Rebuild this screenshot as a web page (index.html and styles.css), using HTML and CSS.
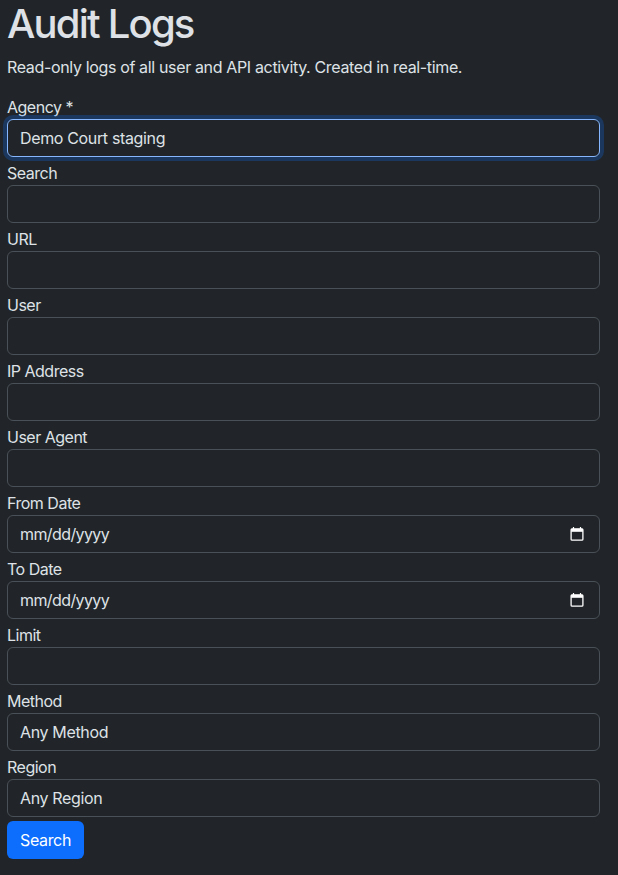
FILE: index.html
```html
<!DOCTYPE html>
<html lang="en">
<head>
<meta charset="utf-8">
<title>Audit Logs</title>
<link rel="stylesheet" href="styles.css">
</head>
<body>
<h1 class="title">Audit Logs</h1>
<p class="lead">Read-only logs of all user and API activity. Created in real-time.</p>
<form class="form">
  <div class="field"><label class="label">Agency *</label><div class="input focus">Demo Court staging</div></div>
  <div class="field"><label class="label">Search</label><div class="input"></div></div>
  <div class="field"><label class="label">URL</label><div class="input"></div></div>
  <div class="field"><label class="label">User</label><div class="input"></div></div>
  <div class="field"><label class="label">IP Address</label><div class="input"></div></div>
  <div class="field"><label class="label">User Agent</label><div class="input"></div></div>
  <div class="field"><label class="label">From Date</label><div class="input"><span class="date-text">mm/dd/yyyy</span><svg class="cal" viewBox="0 0 14 14" width="14" height="14"><path d="M3.5 0v2M10.500 0v2" fill="none" stroke="#fff" stroke-width="1.2"/><rect x="1.100" y="1.800" width="11.800" height="11.400" rx="1" fill="none" stroke="#fff" stroke-width="1.300"/><rect x="1.100" y="1.800" width="11.800" height="3" fill="#fff"/></svg></div></div>
  <div class="field"><label class="label">To Date</label><div class="input"><span class="date-text">mm/dd/yyyy</span><svg class="cal" viewBox="0 0 14 14" width="14" height="14"><path d="M3.5 0v2M10.500 0v2" fill="none" stroke="#fff" stroke-width="1.2"/><rect x="1.100" y="1.800" width="11.800" height="11.400" rx="1" fill="none" stroke="#fff" stroke-width="1.300"/><rect x="1.100" y="1.800" width="11.800" height="3" fill="#fff"/></svg></div></div>
  <div class="field"><label class="label">Limit</label><div class="input"></div></div>
  <div class="field"><label class="label">Method</label><div class="input">Any Method</div></div>
  <div class="field"><label class="label">Region</label><div class="input">Any Region</div></div>
  <button class="btn" type="button">Search</button>
</form>
</body>
</html>
```
FILE: styles.css
```css
* { box-sizing: border-box; }
html, body { margin: 0; }
body {
  background: #212529;
  color: #dee2e6;
  font-family: Inter, "Liberation Sans", sans-serif;
  font-size: 16px;
  line-height: 24px;
  letter-spacing: -0.35px;
  padding: 0 18px 0 7px;
  height: 875px;
  overflow: hidden;
}
.title {
  margin: 0 0 8px;
  font-size: 40px;
  font-weight: 500;
  line-height: 47px;
  letter-spacing: -1.8px;
  color: #dee2e6;
}
.lead { margin: 0 0 16px; }
.form { display: flex; flex-direction: column; gap: 4px; }
.field { display: flex; flex-direction: column; }
.label { display: block; letter-spacing: -0.5px; }
.input {
  height: 38px;
  border: 1px solid #495057;
  border-radius: 6px;
  padding: 0 12px;
  display: flex;
  align-items: center;
  justify-content: space-between;
  color: #dee2e6;
}
.focus { border-color: #86b7fe; box-shadow: 0 0 0 4px rgba(13,110,253,.25); }
.date-text { letter-spacing: -0.6px; }
.cal { margin-right: 3px; }
.btn {
  align-self: flex-start;
  height: 38px;
  width: 77px;
  padding: 0;
  background: #0d6efd;
  color: #fff;
  border: 0;
  border-radius: 6px;
  font: inherit;
  letter-spacing: inherit;
}
```
